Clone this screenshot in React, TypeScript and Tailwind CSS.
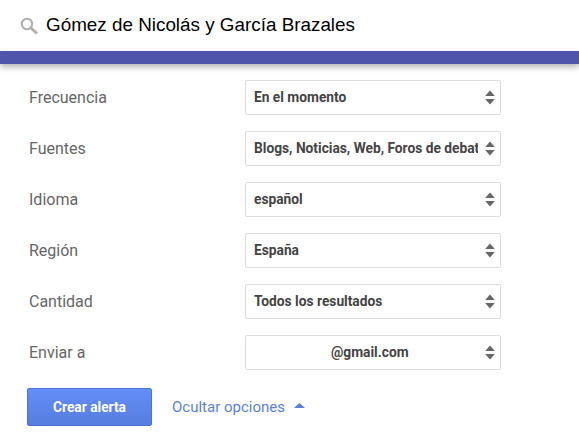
const ROWS = [
  { label: "Frecuencia", value: "En el momento" },
  { label: "Fuentes", value: "Blogs, Noticias, Web, Foros de debate" },
  { label: "Idioma", value: "español" },
  { label: "Región", value: "España" },
  { label: "Cantidad", value: "Todos los resultados" },
];

function Arrows() {
  return (
    <svg width="10" height="15" viewBox="0 0 10 15" className="shrink-0">
      <path d="M5 0.5 L9.8 6 H0.2 Z" fill="#666" />
      <path d="M5 14.5 L9.8 9 H0.2 Z" fill="#666" />
    </svg>
  );
}

function Row({ label, children }: { label: string; children: React.ReactNode }) {
  return (
    <div className="flex h-[35px] items-center">
      <div className="w-[216px] text-[16px] text-[#666]">{label}</div>
      <div className="flex h-[35px] w-[256px] items-center rounded-[2px] border border-[#dcdcdc] bg-white pl-[8px] pr-[5px]">
        <div className="min-w-0 flex-1 overflow-hidden whitespace-nowrap text-[13.75px] font-bold text-[#444]">{children}</div>
        <div className="ml-[7px]"><Arrows /></div>
      </div>
    </div>
  );
}

export default function App() {
  return (
    <div className="h-[439px] w-[579px] overflow-hidden bg-white font-['Roboto',sans-serif]">
      <div className="flex h-[51px] items-center pl-[20px]">
        <svg width="18" height="18" viewBox="0 0 18 18" fill="none" stroke="#adadad" className="mr-[8px]">
          <circle cx="7" cy="7" r="5.2" strokeWidth="2" />
          <path d="M11 11 L17 16.5" strokeWidth="2.8" />
        </svg>
        <span className="font-['Liberation_Sans',sans-serif] text-[18.85px] text-black">Gómez de Nicolás y García Brazales</span>
      </div>
      <div className="h-[13px] bg-[#4f55ab] shadow-[0_3px_6px_rgba(0,0,0,0.3)]" />
      <div className="flex flex-col gap-[16px] pl-[29px] pt-[16px]">
        {ROWS.map((r) => (
          <Row key={r.label} label={r.label}>{r.value}</Row>
        ))}
        <Row label="Enviar a">
          <span className="pl-[77px]">@gmail.com</span>
        </Row>
      </div>
      <div className="mt-[18px] flex items-center pl-[27px]">
        <button className="h-[38px] w-[125px] rounded-[2px] border border-[#4a72d8] bg-gradient-to-b from-[#648ef8] to-[#567ddf] text-[13.75px] font-bold text-white">
          Crear alerta
        </button>
        <span className="ml-[20px] text-[15px] text-[#5a7fe0]">Ocultar opciones</span>
        <svg width="11" height="5" viewBox="0 0 11 5" className="mb-[3px] ml-[9px]">
          <path d="M5.5 0 L11 5 H0 Z" fill="#5a7fe0" />
        </svg>
      </div>
    </div>
  );
}
